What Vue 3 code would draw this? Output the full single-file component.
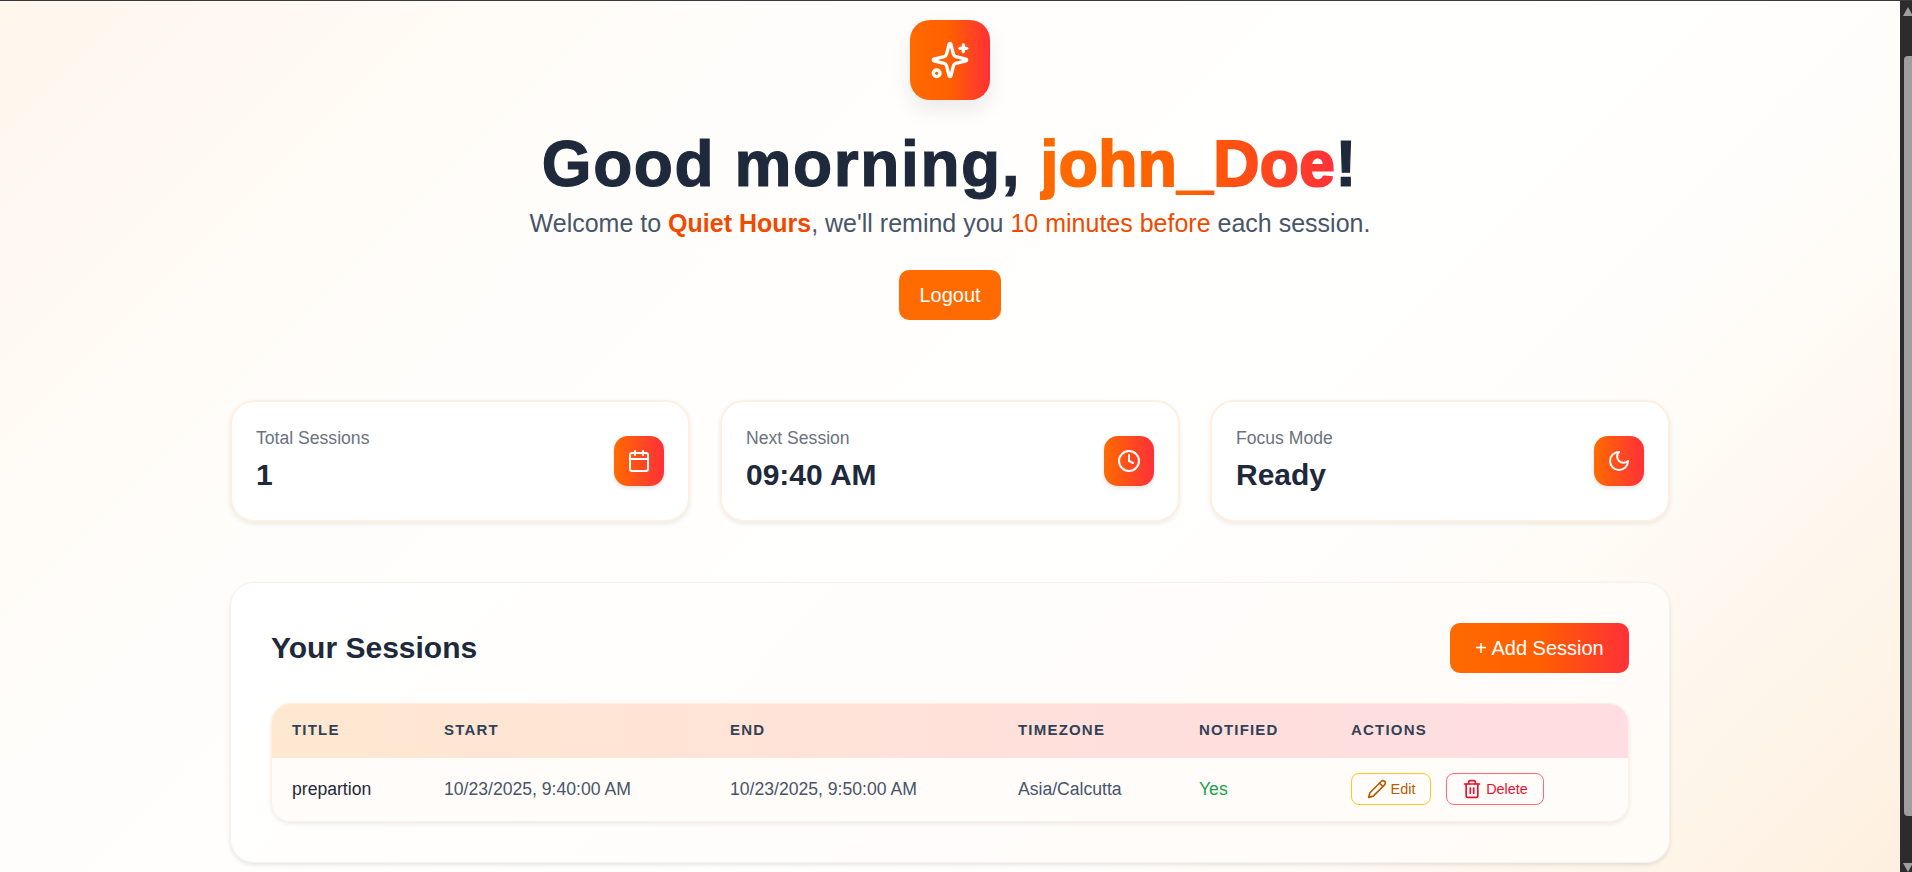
<script setup>
const stats = [
  { label: 'Total Sessions', value: '1', icon: 'calendar' },
  { label: 'Next Session', value: '09:40 AM', icon: 'clock' },
  { label: 'Focus Mode', value: 'Ready', icon: 'moon' }
]

const columns = ['Title', 'Start', 'End', 'Timezone', 'Notified', 'Actions']
</script>

<template>
  <div class="page">
    <svg class="defs" width="0" height="0" aria-hidden="true">
      <filter id="thicken" x="-5%" y="-5%" width="110%" height="110%">
        <feMorphology operator="dilate" radius="0.6" />
      </filter>
    </svg>

    <main class="content">
      <header class="hero">
        <div class="logo">
          <svg width="40" height="40" viewBox="0 0 24 24" fill="none" stroke="#fff" stroke-width="2" stroke-linecap="round" stroke-linejoin="round">
            <path d="M9.937 15.5A2 2 0 0 0 8.5 14.063l-6.135-1.582a.5.5 0 0 1 0-.962L8.5 9.936A2 2 0 0 0 9.937 8.5l1.582-6.135a.5.5 0 0 1 .963 0L14.063 8.5A2 2 0 0 0 15.5 9.937l6.135 1.581a.5.5 0 0 1 0 .964L15.5 14.063a2 2 0 0 0-1.437 1.437l-1.582 6.135a.5.5 0 0 1-.963 0z" />
            <path d="M20 3v4" />
            <path d="M22 5h-4" />
            <circle cx="4" cy="20" r="2" />
          </svg>
        </div>
        <h1 class="greeting">Good morning, <span class="name">john_Doe</span>!</h1>
        <p class="welcome">
          Welcome to <strong class="accent">Quiet Hours</strong>, we'll remind you
          <span class="accent">10 minutes before</span> each session.
        </p>
        <button class="logout">Logout</button>
      </header>

      <section class="stats">
        <div v-for="s in stats" :key="s.label" class="stat-card">
          <div>
            <p class="stat-label">{{ s.label }}</p>
            <p class="stat-value">{{ s.value }}</p>
          </div>
          <div class="stat-icon">
            <svg width="24" height="24" viewBox="0 0 24 24" fill="none" stroke="#fff" stroke-width="2" stroke-linecap="round" stroke-linejoin="round">
              <template v-if="s.icon === 'calendar'">
                <path d="M8 2v4" />
                <path d="M16 2v4" />
                <rect x="3" y="4" width="18" height="18" rx="2" />
                <path d="M3 10h18" />
              </template>
              <template v-else-if="s.icon === 'clock'">
                <circle cx="12" cy="12" r="10" />
                <path d="M12 6v6l4 2" />
              </template>
              <path v-else d="M12 3a6 6 0 0 0 9 9 9 9 0 1 1-9-9Z" />
            </svg>
          </div>
        </div>
      </section>

      <section class="panel">
        <div class="panel-head">
          <h2 class="panel-title">Your Sessions</h2>
          <button class="add-btn">+ Add Session</button>
        </div>

        <div class="table-wrap">
          <table class="sessions">
            <thead>
              <tr>
                <th v-for="c in columns" :key="c">{{ c }}</th>
              </tr>
            </thead>
            <tbody>
              <tr>
                <td class="cell-title">prepartion</td>
                <td>10/23/2025, 9:40:00 AM</td>
                <td>10/23/2025, 9:50:00 AM</td>
                <td>Asia/Calcutta</td>
                <td class="yes">Yes</td>
                <td class="cell-actions">
                  <div class="actions">
                    <button class="btn-edit">
                      <svg width="20" height="20" viewBox="0 0 24 24" fill="none" stroke="currentColor" stroke-width="2" stroke-linecap="round" stroke-linejoin="round">
                        <path d="M17 3a2.85 2.83 0 1 1 4 4L7.5 20.5 2 22l1.5-5.5Z" />
                        <path d="m15 5 4 4" />
                      </svg>
                      Edit
                    </button>
                    <button class="btn-delete">
                      <svg width="20" height="20" viewBox="0 0 24 24" fill="none" stroke="currentColor" stroke-width="2" stroke-linecap="round" stroke-linejoin="round">
                        <path d="M10 11v6" />
                        <path d="M14 11v6" />
                        <path d="M19 6v14a2 2 0 0 1-2 2H7a2 2 0 0 1-2-2V6" />
                        <path d="M3 6h18" />
                        <path d="M8 6V4a2 2 0 0 1 2-2h4a2 2 0 0 1 2 2v2" />
                      </svg>
                      Delete
                    </button>
                  </div>
                </td>
              </tr>
            </tbody>
          </table>
        </div>
      </section>
    </main>

    <div class="scrollbar">
      <span class="arrow-up"></span>
      <span class="thumb"></span>
      <span class="arrow-down"></span>
    </div>
  </div>
</template>

<style scoped>
.page {
  height: 872px;
  display: flex;
  overflow: hidden;
  box-sizing: border-box;
  border-top: 1px solid #3a3a3a;
  font-family: "Liberation Sans", Arial, sans-serif;
  color: #1e293b;
}

.defs {
  position: absolute;
}

.content {
  flex: 1;
  min-width: 0;
  padding-top: 19px;
  background: linear-gradient(135deg, #fff6ec 0%, #fffdfa 25%, #fffffe 55%, #fffdfa 70%, #fdeedc 100%) 0 0 / 100% 965px no-repeat;
}

.hero {
  display: flex;
  flex-direction: column;
  align-items: center;
}

.logo {
  width: 80px;
  height: 80px;
  border-radius: 20px;
  display: flex;
  align-items: center;
  justify-content: center;
  background: linear-gradient(90deg, #ff6a00, #ff5f00 50%, #ff3038);
  box-shadow: 0 10px 20px rgba(0, 0, 0, 0.08);
}

.greeting {
  margin: 24px 0 0;
  font-size: 64px;
  line-height: 80px;
  font-weight: 800;
  letter-spacing: 1.6px;
  -webkit-text-stroke: 1.2px #1e293b;
  color: #1e293b;
}

.name {
  background: linear-gradient(90deg, #ff6a00, #ff5f00 50%, #ff3038);
  -webkit-background-clip: text;
  background-clip: text;
  color: transparent;
  letter-spacing: 0.4px;
  -webkit-text-stroke: 0;
  filter: url(#thicken);
}

.welcome {
  margin: 3px 0 0;
  font-size: 25px;
  line-height: 32px;
  color: #475569;
}

.accent {
  color: #f04a00;
}

.logout {
  margin-top: 31px;
  width: 102px;
  height: 50px;
  border: none;
  border-radius: 10px;
  background: #ff6b00;
  color: #fff;
  font-family: inherit;
  font-size: 20px;
}

.stats {
  width: 1440px;
  margin: 80px auto 0;
  display: grid;
  grid-template-columns: repeat(3, 1fr);
  gap: 30px;
}

.stat-card {
  box-sizing: border-box;
  height: 122px;
  padding: 24px;
  display: flex;
  align-items: center;
  justify-content: space-between;
  background: #fff;
  border: 2px solid #fdf0e2;
  border-radius: 24px;
  box-shadow: 0 2px 5px rgba(0, 0, 0, 0.08);
}

.stat-label {
  margin: 0;
  font-size: 17.6px;
  line-height: 22px;
  color: #6b7280;
}

.stat-value {
  margin: 6px 0 0;
  font-size: 30px;
  line-height: 40px;
  font-weight: 700;
  color: #1e293b;
}

.stat-icon {
  width: 50px;
  height: 50px;
  border-radius: 14px;
  display: flex;
  align-items: center;
  justify-content: center;
  background: linear-gradient(90deg, #ff6a00, #ff3038);
  box-shadow: 0 2px 4px rgba(0, 0, 0, 0.12);
}

.panel {
  box-sizing: border-box;
  width: 1440px;
  margin: 60px auto 0;
  padding: 40px;
  background: linear-gradient(135deg, #ffffff, #fffbf7);
  border: 1px solid #f4f1ee;
  border-radius: 24px;
  box-shadow: 0 2px 4px rgba(0, 0, 0, 0.1);
}

.panel-head {
  display: flex;
  align-items: center;
  justify-content: space-between;
}

.panel-title {
  margin: 0;
  font-size: 30px;
  line-height: 36px;
  font-weight: 700;
  color: #1e293b;
}

.add-btn {
  width: 179px;
  height: 50px;
  border: none;
  border-radius: 10px;
  background: linear-gradient(90deg, #ff6a00, #ff5f00 50%, #ff3038);
  color: #fff;
  font-family: inherit;
  font-size: 20px;
}

.table-wrap {
  margin-top: 30px;
  overflow: hidden;
  border: 1px solid #fdf0e2;
  border-radius: 20px;
  box-shadow: 0 2px 4px rgba(0, 0, 0, 0.08);
}

.sessions {
  width: 100%;
  border-collapse: collapse;
  table-layout: fixed;
}

.sessions thead tr {
  background: linear-gradient(90deg, #ffe8d1, #ffdfdc 65%, #ffdde2);
}

.sessions th {
  box-sizing: border-box;
  height: 54px;
  padding: 0 20px 3px;
  text-align: left;
  font-size: 15px;
  font-weight: 700;
  letter-spacing: 1.2px;
  text-transform: uppercase;
  color: #334155;
}

.sessions th:nth-child(1) { width: 152px; }
.sessions th:nth-child(2) { width: 286px; }
.sessions th:nth-child(3) { width: 288px; }
.sessions th:nth-child(4) { width: 181px; }
.sessions th:nth-child(5) { width: 152px; }

.sessions tbody tr {
  background: #fffcf9;
}

.sessions td {
  box-sizing: border-box;
  height: 63px;
  padding: 0 20px 1px;
  font-size: 17.6px;
  color: #475569;
}

.sessions td.cell-title {
  color: #1e293b;
}

.sessions td.yes {
  color: #16a34a;
}

.sessions td.cell-actions {
  padding-bottom: 2px;
}

.actions {
  display: flex;
  gap: 15px;
}

.btn-edit,
.btn-delete {
  box-sizing: border-box;
  height: 32px;
  display: inline-flex;
  align-items: center;
  justify-content: center;
  gap: 4px;
  padding: 0;
  background: transparent;
  border-radius: 8px;
  font-family: inherit;
  font-size: 14.4px;
}

.btn-edit {
  width: 80px;
  border: 1px solid #ffc81e;
  color: #b45f06;
}

.btn-delete {
  width: 98px;
  border: 1px solid #ff6b75;
  color: #e8112d;
}

.scrollbar {
  flex: 0 0 12px;
  overflow: hidden;
  display: flex;
  flex-direction: column;
  background: #2c2c2c;
}

.arrow-up,
.arrow-down {
  width: 0;
  height: 0;
  margin-left: 3px;
  border-left: 5px solid transparent;
  border-right: 5px solid transparent;
}

.arrow-up {
  margin-top: 6px;
  border-bottom: 9px solid #a0a0a0;
}

.thumb {
  flex: 0 0 760px;
  margin: 40px 0 0 4px;
  border-radius: 4px 0 0 4px;
  background: #9f9f9f;
}

.arrow-down {
  margin-top: 47px;
  border-top: 9px solid #a0a0a0;
}
</style>

<style>
html,
body {
  margin: 0;
  overflow: hidden;
}
</style>
